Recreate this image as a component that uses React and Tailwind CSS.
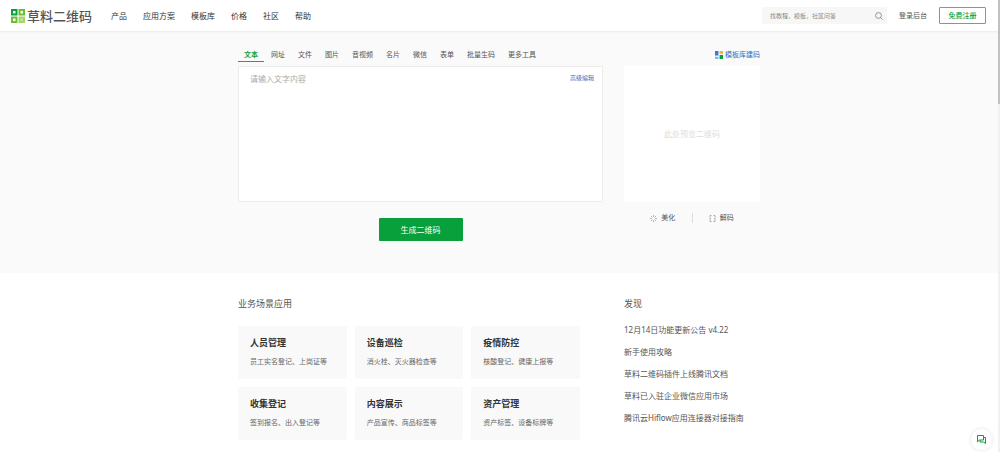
import React from "react";

const navItems = ["产品", "应用方案", "模板库", "价格", "社区", "帮助"];

const tabs = ["文本", "网址", "文件", "图片", "音视频", "名片", "微信", "表单", "批量生码", "更多工具"];

const scenes = [
    { title: "人员管理", desc: "员工实名登记、上岗证等" },
    { title: "设备巡检", desc: "消火栓、灭火器检查等" },
    { title: "疫情防控", desc: "核酸登记、健康上报等" },
    { title: "收集登记", desc: "签到报名、出入登记等" },
    { title: "内容展示", desc: "产品宣传、商品标签等" },
    { title: "资产管理", desc: "资产标签、设备标牌等" },
];

const news = [
    "12月14日功能更新公告 v4.22",
    "新手使用攻略",
    "草料二维码插件上线腾讯文档",
    "草料已入驻企业微信应用市场",
    "腾讯云Hiflow应用连接器对接指南",
];

function Logo() {
    return (
        <a href="#" className="flex items-center gap-0.5 text-[13px] leading-4 font-medium text-[#555]">
            <svg className="w-[14px] h-[14px]" viewBox="0 0 14 14" fill="none" strokeWidth="2">
                <path stroke="#0a9f3c" d="M1 1h4.5v4.5H1z" />
                <path stroke="#6cbd35" d="M8.5 1H13v4.5H8.5z" />
                <path stroke="#6cbd35" d="M1 8.5h4.5V13H1z" />
                <path stroke="#a5d46a" fill="#c5e59c" d="M8.5 8.5H13V13H8.5z" />
            </svg>
            草料二维码
        </a>
    );
}

function Header() {
    return (
        <header className="relative flex items-center h-[31px] pl-[11px] pr-3 bg-white shadow-[0_0_3px_rgba(0,0,0,0.12)]">
            <Logo />
            <nav className="flex items-center gap-4 ml-[19px] text-[8px] leading-3 text-[#333]">
                {navItems.map((item) => (
                    <a key={item} href="#" className="hover:text-[#0a9f3c]">{item}</a>
                ))}
            </nav>
            <div className="flex items-center ml-auto text-[7px] leading-3 text-[#555]">
                <label className="flex items-center w-[125px] h-[17px] px-2 mr-3 bg-[#f7f7f7]">
                    <input
                        type="search"
                        aria-label="搜索"
                        placeholder="找教程，模板，社区问答"
                        className="flex-1 min-w-0 text-[6px] leading-3 outline-none placeholder:text-[#8a8a8a]"
                    />
                    <svg className="w-2 h-2 -mr-1" viewBox="0 0 16 16" fill="none" stroke="#777" strokeWidth="1.5">
                        <circle cx="7" cy="7" r="5.8" />
                        <path d="M11.2 11.2L15 15" />
                    </svg>
                </label>
                <a href="#" className="mr-3">登录后台</a>
                <button type="button" className="w-[47px] h-[17px] border border-[#4fb974] rounded-[1px] bg-white font-medium text-[#0a9f3c]">
                    免费注册
                </button>
            </div>
        </header>
    );
}

function Generator() {
    return (
        <section className="pt-[17px] pb-8 bg-[#fafafa]">
            <div className="flex gap-[21px] max-w-[522px] mx-auto">
                <div className="flex-1 min-w-0">
                    <div className="flex gap-px h-[14px] text-[7px] leading-3 text-[#555]">
                        {tabs.map((tab, i) => (
                            <button
                                key={tab}
                                type="button"
                                className={
                                    i === 0
                                        ? "px-1.5 border-b border-[#0fae4a] font-bold text-[#0a9f3c] whitespace-nowrap"
                                        : "px-1.5 border-b border-transparent whitespace-nowrap"
                                }
                            >
                                {tab}
                            </button>
                        ))}
                    </div>
                    <div className="flex items-start h-[136px] mt-1 pt-1.5 pr-2 pl-[11px] bg-white border border-[#ececec] rounded-[1px]">
                        <textarea
                            aria-label="文字内容"
                            placeholder="请输入文字内容"
                            className="flex-1 h-full resize-none outline-none text-[8px] leading-3 placeholder:text-[#aaa]"
                        />
                        <a href="#" className="text-[6px] leading-[11px] text-[#2f6fc4]">高级编辑</a>
                    </div>
                    <button type="button" className="block w-[84px] h-[23px] mt-4 mx-auto rounded-[1px] bg-[#07a03a] text-[8px] leading-3 text-white">
                        生成二维码
                    </button>
                </div>
                <aside className="w-[136px]">
                    <a href="#" className="flex items-center justify-end gap-0.5 h-[14px] text-[7px] leading-3 text-[#2f6fc4]">
                        <svg className="w-2 h-2" viewBox="0 0 14 14">
                            <path fill="#2f7fd6" d="M0 0h6v8H0z" />
                            <path fill="#f5b52e" d="M8 0h6v5H8z" />
                            <path fill="#7db9ee" d="M0 10h6v4H0z" />
                            <path fill="#0a9f3c" d="M8 7h6v7H8z" />
                        </svg>
                        模板库建码
                    </a>
                    <div className="flex items-center justify-center h-[136px] mt-1 bg-white text-[8px] leading-3 text-[#ddd]">
                        此处预览二维码
                    </div>
                    <div className="flex items-center mt-2.5 text-[7px] leading-3 text-[#555]">
                        <button type="button" className="flex flex-1 items-center justify-center gap-1 pl-2.5">
                            <svg className="w-[7px] h-[7px]" viewBox="0 0 14 14" fill="none" stroke="#888" strokeWidth="1.2">
                                <path d="M7 0v4M7 10v4M0 7h4M10 7h4M2 2l2.6 2.6M9.4 9.4L12 12M12 2L9.4 4.6M4.6 9.4L2 12" />
                            </svg>
                            美化
                        </button>
                        <span className="w-px h-2.5 bg-[#ddd]" />
                        <button type="button" className="flex flex-1 items-center justify-center gap-1 pr-2.5">
                            <svg className="w-[7px] h-[7px]" viewBox="0 0 14 14" fill="none" stroke="#888" strokeWidth="1.4">
                                <path d="M5 1H2v4M9 1h3v4M5 13H2V9M9 13h3V9M1 7h3M10 7h3" />
                            </svg>
                            解码
                        </button>
                    </div>
                </aside>
            </div>
        </section>
    );
}

export default function App() {
    return (
        <div className="pr-0.5 bg-white font-['Noto_Sans','Noto_Sans_CJK_SC',sans-serif]">
            <Header />
            <Generator />
            <section className="flex justify-between max-w-[522px] mx-auto pt-6 pb-3">
                <div className="w-[342px]">
                    <h2 className="text-[9px] leading-[14px] text-[#555]">业务场景应用</h2>
                    <div className="grid grid-cols-3 gap-2 mt-[15px]">
                        {scenes.map((scene) => (
                            <a key={scene.title} href="#" className="block h-[53px] pt-2.5 px-3 rounded-[1px] bg-[#f9f9f9]">
                                <h3 className="text-[9px] leading-[14px] font-bold text-[#333]">{scene.title}</h3>
                                <p className="mt-1.5 text-[7px] leading-3 text-[#666] whitespace-nowrap">{scene.desc}</p>
                            </a>
                        ))}
                    </div>
                </div>
                <div className="w-[136px]">
                    <h2 className="text-[9px] leading-[14px] text-[#555]">发现</h2>
                    <ul className="flex flex-col gap-2.5 mt-[13px] text-[8px] leading-3 text-[#555]">
                        {news.map((item) => (
                            <li key={item}>
                                <a href="#" className="whitespace-nowrap">{item}</a>
                            </li>
                        ))}
                    </ul>
                </div>
            </section>

            <button
                type="button"
                aria-label="在线客服"
                className="fixed right-2 bottom-0.5 flex items-center justify-center w-[21px] h-[21px] rounded-full bg-white shadow-[0_0_4px_rgba(0,0,0,0.12)]"
            >
                <svg className="w-[9px] h-[9px]" viewBox="0 0 18 18" fill="none" stroke="#0a9f3c" strokeWidth="2">
                    <path d="M1 1h12v9H5l-4 3.5z" />
                    <path d="M13 5h4v12l-3.5-3H6v-4" />
                </svg>
            </button>
            <div className="fixed top-0 right-0 w-0.5 h-full bg-[#f1f1f1]">
                <div className="h-[23%] bg-[#c1c1c1]" />
            </div>
        </div>
    );
}
